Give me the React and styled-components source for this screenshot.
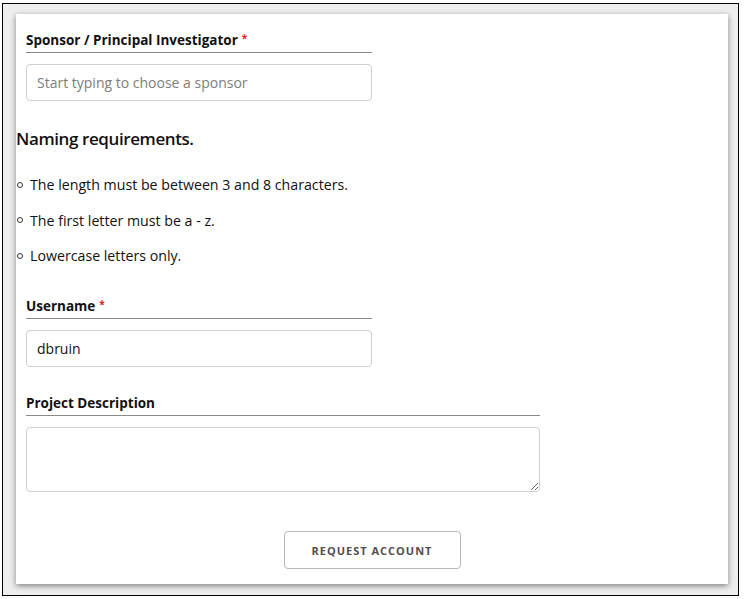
import styled, { createGlobalStyle } from "styled-components";

const GlobalStyle = createGlobalStyle`
    html, body {
        margin: 0;
        padding: 0;
        background: #ffffff;
    }
    body {
        font-family: "Open Sans", "Liberation Sans", sans-serif;
        color: #111;
    }
`;

const Frame = styled.div`
    box-sizing: border-box;
    width: 737px;
    height: 593px;
    margin: 3px 0 0 2px;
    border: 1px solid #000;
    background: #eeeeee;
    padding: 10px 9px 10px 13px;
`;

const Card = styled.div`
    box-sizing: border-box;
    width: 712px;
    height: 570px;
    background: #fff;
    box-shadow: 0 2px 6px rgba(0, 0, 0, 0.45);
    padding: 16px 0 0 0;
    display: flex;
    flex-direction: column;
`;

const Field = styled.div`
    margin-left: 10px;
    width: ${(p) => p.width}px;
    margin-bottom: ${(p) => p.gap || 0}px;
`;

const Label = styled.div`
    font-size: 13.5px;
    font-weight: 700;
    color: #111;
    line-height: 16px;
    padding-bottom: 4px;
    border-bottom: 1px solid #8a8a8a;
    margin-bottom: 11px;
`;

const Required = styled.span`
    color: #e0201b;
    margin-left: 4px;
    font-size: 10px;
    vertical-align: 3px;
`;

const TextInput = styled.input`
    box-sizing: border-box;
    display: block;
    width: 100%;
    height: 37px;
    border: 1px solid #cfcfcf;
    border-radius: 4px;
    padding: 0 10px;
    font-family: inherit;
    font-size: 14px;
    color: #111;
    outline: none;
    &::placeholder {
        color: #7d7d7d;
    }
`;

const TextArea = styled.textarea`
    box-sizing: border-box;
    display: block;
    width: 100%;
    height: 65px;
    border: 1px solid #cfcfcf;
    border-radius: 4px;
    padding: 8px 10px;
    font-family: inherit;
    font-size: 14px;
    outline: none;
    resize: vertical;
`;

const Heading = styled.h3`
    margin: 27px 0 25px 0;
    font-size: 17px;
    font-weight: 600;
    letter-spacing: -0.4px;
    line-height: 22px;
    color: #111;
`;

const Rules = styled.ul`
    list-style: none;
    margin: 0 0 31px 0;
    padding: 0;
    display: flex;
    flex-direction: column;
    gap: 16.5px;
`;

const Rule = styled.li`
    display: flex;
    align-items: center;
    font-size: 14.2px;
    line-height: 19px;
    color: #111;
`;

const Bullet = styled.span`
    box-sizing: border-box;
    width: 6px;
    height: 6px;
    border: 1px solid #333;
    border-radius: 50%;
    margin: 0 7px 0 1px;
`;

const ButtonRow = styled.div`
    display: flex;
    justify-content: center;
    margin-top: 39px;
`;

const RequestButton = styled.button`
    box-sizing: border-box;
    width: 177px;
    height: 38px;
    background: #fff;
    border: 1px solid #b9b9b9;
    border-radius: 4px;
    font-family: inherit;
    font-size: 11px;
    font-weight: 700;
    letter-spacing: 1px;
    color: #4f4f4f;
`;

const rules = [
    "The length must be between 3 and 8 characters.",
    "The first letter must be a - z.",
    "Lowercase letters only.",
];

const App = () => {
    return (
        <>
            <GlobalStyle />
            <Frame>
                <Card>
                    <Field width={346}>
                        <Label>
                            Sponsor / Principal Investigator<Required>*</Required>
                        </Label>
                        <TextInput placeholder="Start typing to choose a sponsor" />
                    </Field>
                    <Heading>Naming requirements.</Heading>
                    <Rules>
                        {rules.map((rule, index) => (
                            <Rule key={index}>
                                <Bullet />
                                {rule}
                            </Rule>
                        ))}
                    </Rules>
                    <Field width={346} gap={28}>
                        <Label>
                            Username<Required>*</Required>
                        </Label>
                        <TextInput defaultValue="dbruin" />
                    </Field>
                    <Field width={514}>
                        <Label>Project Description</Label>
                        <TextArea />
                    </Field>
                    <ButtonRow>
                        <RequestButton>REQUEST ACCOUNT</RequestButton>
                    </ButtonRow>
                </Card>
            </Frame>
        </>
    );
};

export default App;
